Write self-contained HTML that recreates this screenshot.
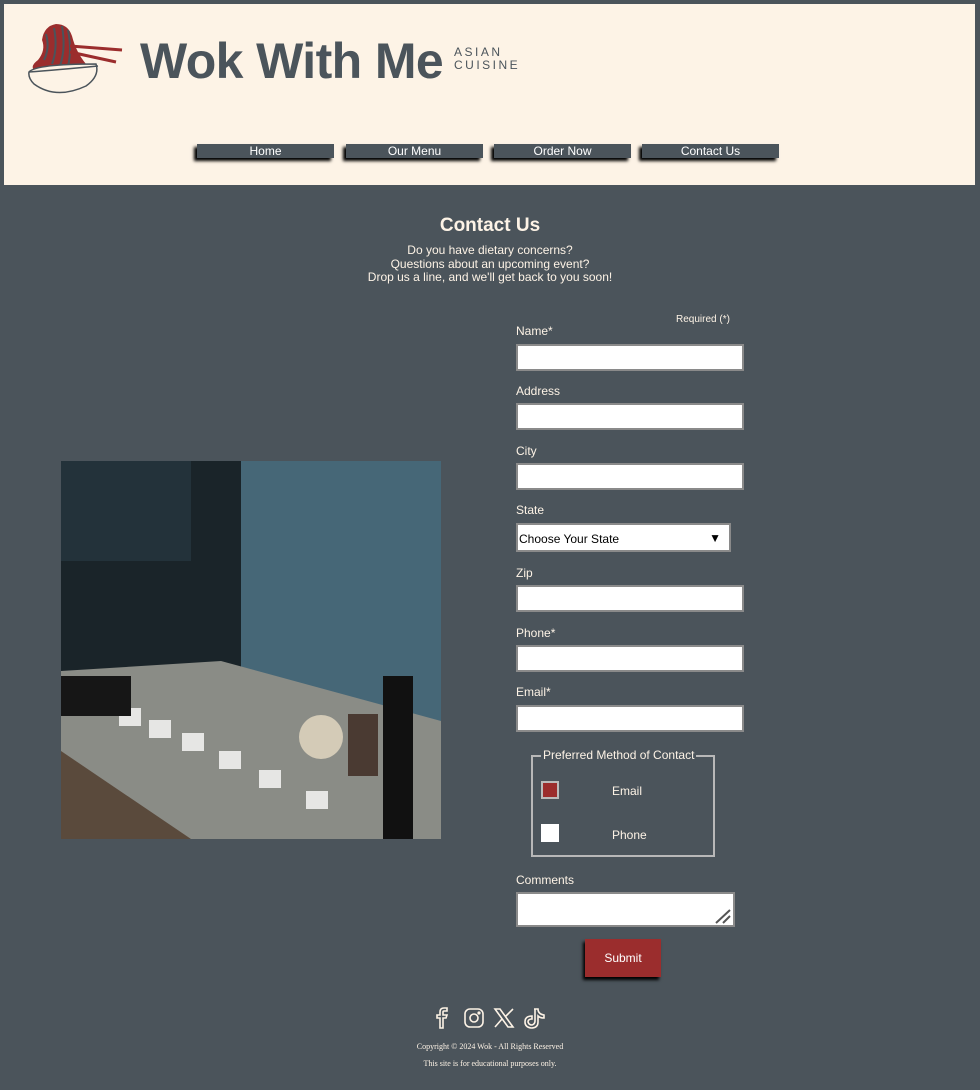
<!DOCTYPE html>
<html><head><meta charset="utf-8">
<style>
*{margin:0;padding:0;box-sizing:border-box}
body{width:980px;height:1090px;background:#4b545b;font-family:"Liberation Sans",sans-serif;color:#fdf3e6;position:relative;overflow:hidden}
.hdr{position:absolute;left:4px;top:4px;width:971px;height:181px;background:#fdf3e6}
.title{position:absolute;left:140px;top:32px;font-size:50px;font-weight:bold;color:#4b545b;letter-spacing:-0.6px}
.sub{position:absolute;left:454px;top:46px;font-size:12px;color:#4b545b;letter-spacing:2.5px;line-height:13px}
.nav{position:absolute;top:144px;height:14px;width:137px;background:#4b545b;color:#fff;font-size:12px;text-align:center;line-height:14px;box-shadow:-3px 3px 3px #000}
.a{position:absolute;font-size:12px;color:#fdf3e6}
.lbl{position:absolute;left:516px;font-size:12px}
.inp{position:absolute;left:516px;width:228px;height:27px;background:#fff;border:2px solid #8a8a8a}
</style></head><body>
<div class="hdr"></div>
<svg style="position:absolute;left:26px;top:20px" width="100" height="76" viewBox="0 0 100 76">
<path d="M8 50 Q4 46 12 40 Q20 30 16 20 Q18 6 30 4 Q42 4 46 16 Q50 32 60 44 Q40 52 8 50Z" fill="#9b2d2d"/>
<path d="M18 40 Q24 28 20 14 M26 44 Q32 28 28 8 M34 46 Q40 28 36 6 M42 46 Q46 30 42 10" stroke="#4b545b" stroke-width="2" fill="none"/>
<path d="M44 26 L96 30 M44 32 L90 42" stroke="#9b2d2d" stroke-width="3"/>
<path d="M3 52 Q10 44 70 44 Q74 56 60 66 Q30 80 8 64 Q2 58 3 52Z" fill="#fdf3e6" stroke="#4b545b" stroke-width="1.5"/>
<path d="M3 52 Q30 50 72 46" stroke="#4b545b" stroke-width="1.5" fill="none"/>
</svg>
<div class="title">Wok With Me</div>
<div class="sub">ASIAN<br>CUISINE</div>
<div class="nav" style="left:197px">Home</div>
<div class="nav" style="left:346px">Our Menu</div>
<div class="nav" style="left:494px">Order Now</div>
<div class="nav" style="left:642px">Contact Us</div>

<div class="a" style="left:0;width:980px;text-align:center;top:215px;font-size:19px;font-weight:bold">Contact Us</div>
<div class="a" style="left:0;width:980px;text-align:center;top:244px;line-height:13.5px">Do you have dietary concerns?<br>Questions about an upcoming event?<br>Drop us a line, and we'll get back to you soon!</div>

<svg style="position:absolute;left:61px;top:461px" width="380" height="378" viewBox="0 0 380 378">
<rect width="380" height="378" fill="#1a2429"/>
<rect x="180" y="0" width="200" height="260" fill="#466777"/>
<rect x="0" y="0" width="130" height="100" fill="#23323a"/>
<path d="M0 210 L160 200 L380 260 L380 378 L0 378Z" fill="#8a8c86"/>
<path d="M0 290 L130 378 L0 378Z" fill="#5a4a3c"/>
<g fill="#e6e6e4"><rect x="58" y="247" width="22" height="18"/><rect x="88" y="259" width="22" height="18"/><rect x="121" y="272" width="22" height="18"/><rect x="158" y="290" width="22" height="18"/><rect x="198" y="309" width="22" height="18"/><rect x="245" y="330" width="22" height="18"/></g>
<ellipse cx="260" cy="276" rx="22" ry="22" fill="#d4cbb7"/>
<rect x="287" y="253" width="30" height="62" fill="#4a3a32"/>
<rect x="322" y="215" width="30" height="163" fill="#111"/>
<rect x="0" y="215" width="70" height="40" fill="#161616"/>
</svg>

<div class="a" style="left:676px;top:314px;font-size:10px">Required (*)</div>
<div class="lbl" style="top:324px">Name*</div><div class="inp" style="top:344px"></div>
<div class="lbl" style="top:384px">Address</div><div class="inp" style="top:403px"></div>
<div class="lbl" style="top:444px">City</div><div class="inp" style="top:463px"></div>
<div class="lbl" style="top:503px">State</div>
<div class="inp" style="top:523px;width:215px;height:29px;color:#000;font-size:12px;padding:7px 0 0 1px">Choose Your State<span style="position:absolute;right:8px;top:6px;font-size:12px">▼</span></div>
<div class="lbl" style="top:566px">Zip</div><div class="inp" style="top:585px"></div>
<div class="lbl" style="top:626px">Phone*</div><div class="inp" style="top:645px"></div>
<div class="lbl" style="top:685px">Email*</div><div class="inp" style="top:705px"></div>

<div style="position:absolute;left:531px;top:755px;width:184px;height:102px;border:2px solid #b8b8b8"></div>
<div class="a" style="left:541px;top:748px;background:#4b545b;padding:0 2px">Preferred Method of Contact</div>
<div style="position:absolute;left:541px;top:781px;width:18px;height:18px;background:#9b2d2d;border:2px solid #bbb"></div>
<div class="a" style="left:612px;top:784px">Email</div>
<div style="position:absolute;left:541px;top:824px;width:18px;height:18px;background:#fff"></div>
<div class="a" style="left:612px;top:828px">Phone</div>

<div class="lbl" style="top:873px">Comments</div>
<div class="inp" style="top:892px;width:219px;height:35px"><svg style="position:absolute;right:1px;bottom:1px" width="18" height="16"><path d="M2 15 L16 2 M9 15 L16 8" stroke="#555" stroke-width="2"/></svg></div>
<div style="position:absolute;left:585px;top:939px;width:76px;height:38px;background:#9b2d2d;color:#fff;font-size:12px;text-align:center;line-height:38px;box-shadow:-2px 3px 3px #000">Submit</div>

<svg style="position:absolute;left:434px;top:1006px" width="114" height="24" viewBox="0 0 114 24" fill="none" stroke="#fdf3e6" stroke-width="1.6">
<path d="M6 22V12H3V9H6V6Q6 2 10 2H13V5H10Q9 5 9 6V9H13L12 12H9V22Z"/>
<rect x="31" y="3" width="18" height="18" rx="5"/><circle cx="40" cy="12" r="4"/><circle cx="45" cy="7" r="0.8" fill="#fdf3e6"/>
<path d="M61 3H66L79 21H74Z M61 21L68 13 M72 10L79 3"/>
<path d="M100 3H104Q104 8 110 9V12Q106 12 104 10V16Q104 22 97 22Q91 21 91 16Q91 10 98 10V13Q94 13 94 16Q95 19 98 19Q101 18 101 15V3Z"/>
</svg>
<div class="a" style="left:0;width:980px;text-align:center;top:1042px;font-size:8px;font-family:'Liberation Serif',serif">Copyright © 2024 Wok - All Rights Reserved</div>
<div class="a" style="left:0;width:980px;text-align:center;top:1059px;font-size:8px;font-family:'Liberation Serif',serif">This site is for educational purposes only.</div>
</body></html>
